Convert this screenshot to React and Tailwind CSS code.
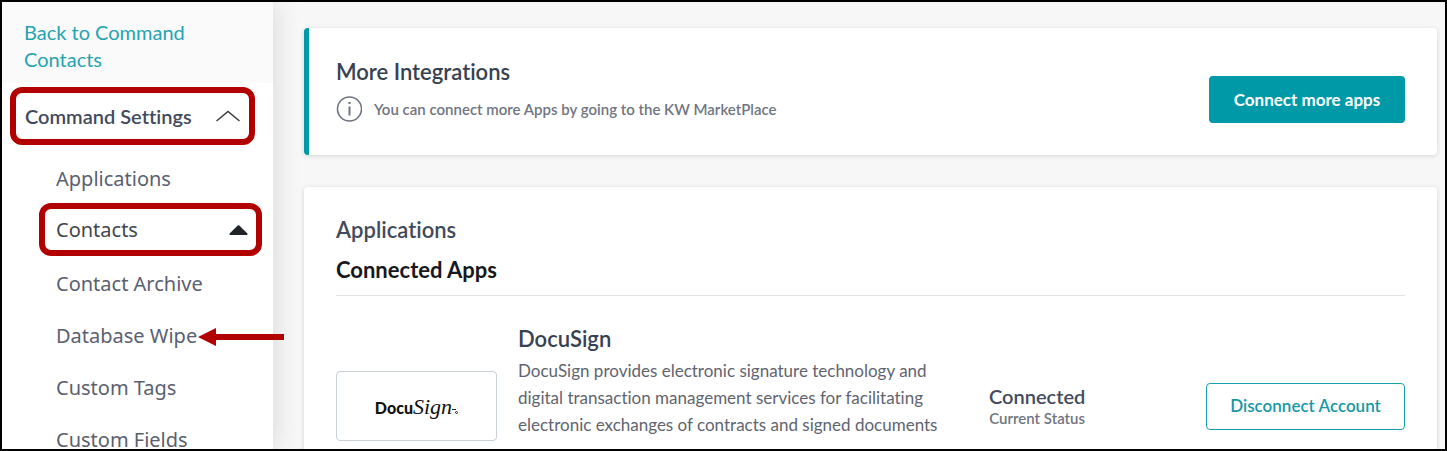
import React, { useState } from "react";

const subItems = ["Contact Archive", "Database Wipe", "Custom Tags", "Custom Fields"];

const Sidebar = () => {
  const [open, setOpen] = useState(true);

  return (
    <aside className="relative z-10 w-[271px] shrink-0 bg-white shadow-[0_0_26px_rgba(0,0,0,0.14)]">
      <div className="bg-[#fafafa] pl-[22px] pr-16 pt-[17px] pb-[10px]">
        <a href="#contacts" className="block text-xl leading-[27px] text-[#26a3b0]">
          Back to Command Contacts
        </a>
      </div>

      <nav aria-label="Command settings">
        <button
          type="button"
          onClick={() => setOpen(!open)}
          aria-expanded={open}
          className="mt-1 ml-2 flex h-[58px] w-[245px] items-center justify-between rounded-xl border-6 border-[#b20000] pl-[9px] pr-[9px] text-xl font-semibold text-[#434a5c] cursor-pointer"
        >
          Command Settings
          <svg width="24" height="12" viewBox="0 0 24 12" fill="none" stroke="#3c3c3c" strokeWidth="1.5">
            <path d="M0.5 11 L12 1.5 L23.5 11" />
          </svg>
        </button>

        {open && (
          <ul className="mt-[6px] font-['Noto_Sans',sans-serif] text-xl text-[#5a6070]">
            <li>
              <a href="#applications" className="flex h-[52px] items-center pt-[3px] pl-[54px]">
                Applications
              </a>
            </li>
            <li>
              <a
                href="#contacts-settings"
                className="ml-[37px] mr-[11px] flex h-[53px] items-center justify-between rounded-xl border-6 border-[#b20000] pl-[11px] pr-[8px] pt-px text-[#43464b]"
              >
                Contacts
                <svg width="19" height="10" viewBox="0 0 19 10" fill="#212529">
                  <path d="M8.7 0.5 Q9.5 -0.1 10.3 0.5 L18.4 8.6 Q19 10 17.6 10 L1.4 10 Q0 10 0.6 8.6 Z" />
                </svg>
              </a>
            </li>
            {subItems.map((item) => (
              <li key={item} className="relative">
                <a href="#settings" className="flex h-[52px] items-center pt-[3px] pl-[54px]">
                  {item}
                </a>
                {item === "Database Wipe" && (
                  <svg
                    className="absolute top-5 left-[196px]"
                    width="86"
                    height="18"
                    viewBox="0 0 86 18"
                    fill="#b20000"
                  >
                    <path d="M0 9 L18 0 V6 H86 V12 H18 V18 Z" />
                  </svg>
                )}
              </li>
            ))}
          </ul>
        )}
      </nav>
    </aside>
  );
};

const DocuSignLogo = () => (
  <div className="flex h-[70px] w-[161px] shrink-0 items-center justify-center rounded border border-[#c9d0d6] text-[#111]">
    <div className="flex items-baseline">
      <span className="text-base font-black">Docu</span>
      <span className="font-['Liberation_Serif',serif] text-[22px] italic">Sign</span>
      <svg width="6" height="6" viewBox="0 0 6 6" fill="none" stroke="#222">
        <path d="M0 1.5 L4 1.5" />
        <circle cx="4.5" cy="4.5" r="1" />
      </svg>
    </div>
  </div>
);

const IntegrationsCard = () => (
  <section className="flex min-h-[127px] items-start justify-between rounded border-l-5 border-[#0099a8] bg-white pl-[27px] pr-8 shadow-[0_1px_5px_rgba(0,0,0,0.14)]">
    <div className="pt-[30px]">
      <h2 className="text-[22px] leading-7 font-semibold text-[#374151]">More Integrations</h2>
      <div className="mt-[10px] flex items-center gap-3">
        <svg width="26" height="26" viewBox="0 0 26 26" fill="none" stroke="#6f7580" strokeWidth="1.6">
          <circle cx="13.5" cy="13" r="12" />
          <path d="M13.5 10.5 V19.5" strokeWidth="2" />
          <path d="M13.5 6 V8" strokeWidth="2.2" />
        </svg>
        <p className="text-[15px] font-semibold text-[#70757f]">
          You can connect more Apps by going to the KW MarketPlace
        </p>
      </div>
    </div>
    <button
      type="button"
      className="mt-12 h-[47px] w-[196px] rounded bg-[#0099a8] text-[17px] font-bold text-white cursor-pointer"
    >
      Connect more apps
    </button>
  </section>
);

const ApplicationsCard = () => (
  <section className="mt-8 rounded bg-white px-8 pt-[29px] pb-8 shadow-[0_1px_5px_rgba(0,0,0,0.14)]">
    <h2 className="text-[22px] leading-7 font-semibold text-[#434a5c]">Applications</h2>
    <h3 className="mt-3 border-b border-[#e2e2e2] pb-[11px] text-[22px] leading-7 font-bold text-[#16181d]">
      Connected Apps
    </h3>

    <div className="mt-[29px] flex min-h-[162px] items-center">
      <DocuSignLogo />
      <div className="ml-[21px] w-[430px] self-start">
        <h4 className="text-[22px] leading-7 font-semibold text-[#374151]">DocuSign</h4>
        <p className="mt-1 text-[17px] leading-[27px] text-[#5f6470]">
          DocuSign provides electronic signature technology and digital transaction management
          services for facilitating electronic exchanges of contracts and signed documents
        </p>
      </div>
      <div className="ml-[41px] text-center">
        <p className="text-xl leading-6 font-semibold text-[#434a5c]">Connected</p>
        <p className="text-[15px] leading-5 font-semibold text-[#70757f]">Current Status</p>
      </div>
      <button
        type="button"
        className="ml-auto h-[47px] w-[199px] rounded border border-[#1a9fac] text-[17px] font-semibold text-[#1698a6] cursor-pointer"
      >
        Disconnect Account
      </button>
    </div>
  </section>
);

const App = () => {
  return (
    <div className="flex h-screen overflow-hidden border-2 border-black bg-[#f7f7f7] font-['Lato',sans-serif] [font-variant-ligatures:none]">
      <Sidebar />
      <main className="min-w-0 flex-1 pt-[26px] pl-[31px] pr-2">
        <IntegrationsCard />
        <ApplicationsCard />
      </main>
    </div>
  );
};

export default App;
